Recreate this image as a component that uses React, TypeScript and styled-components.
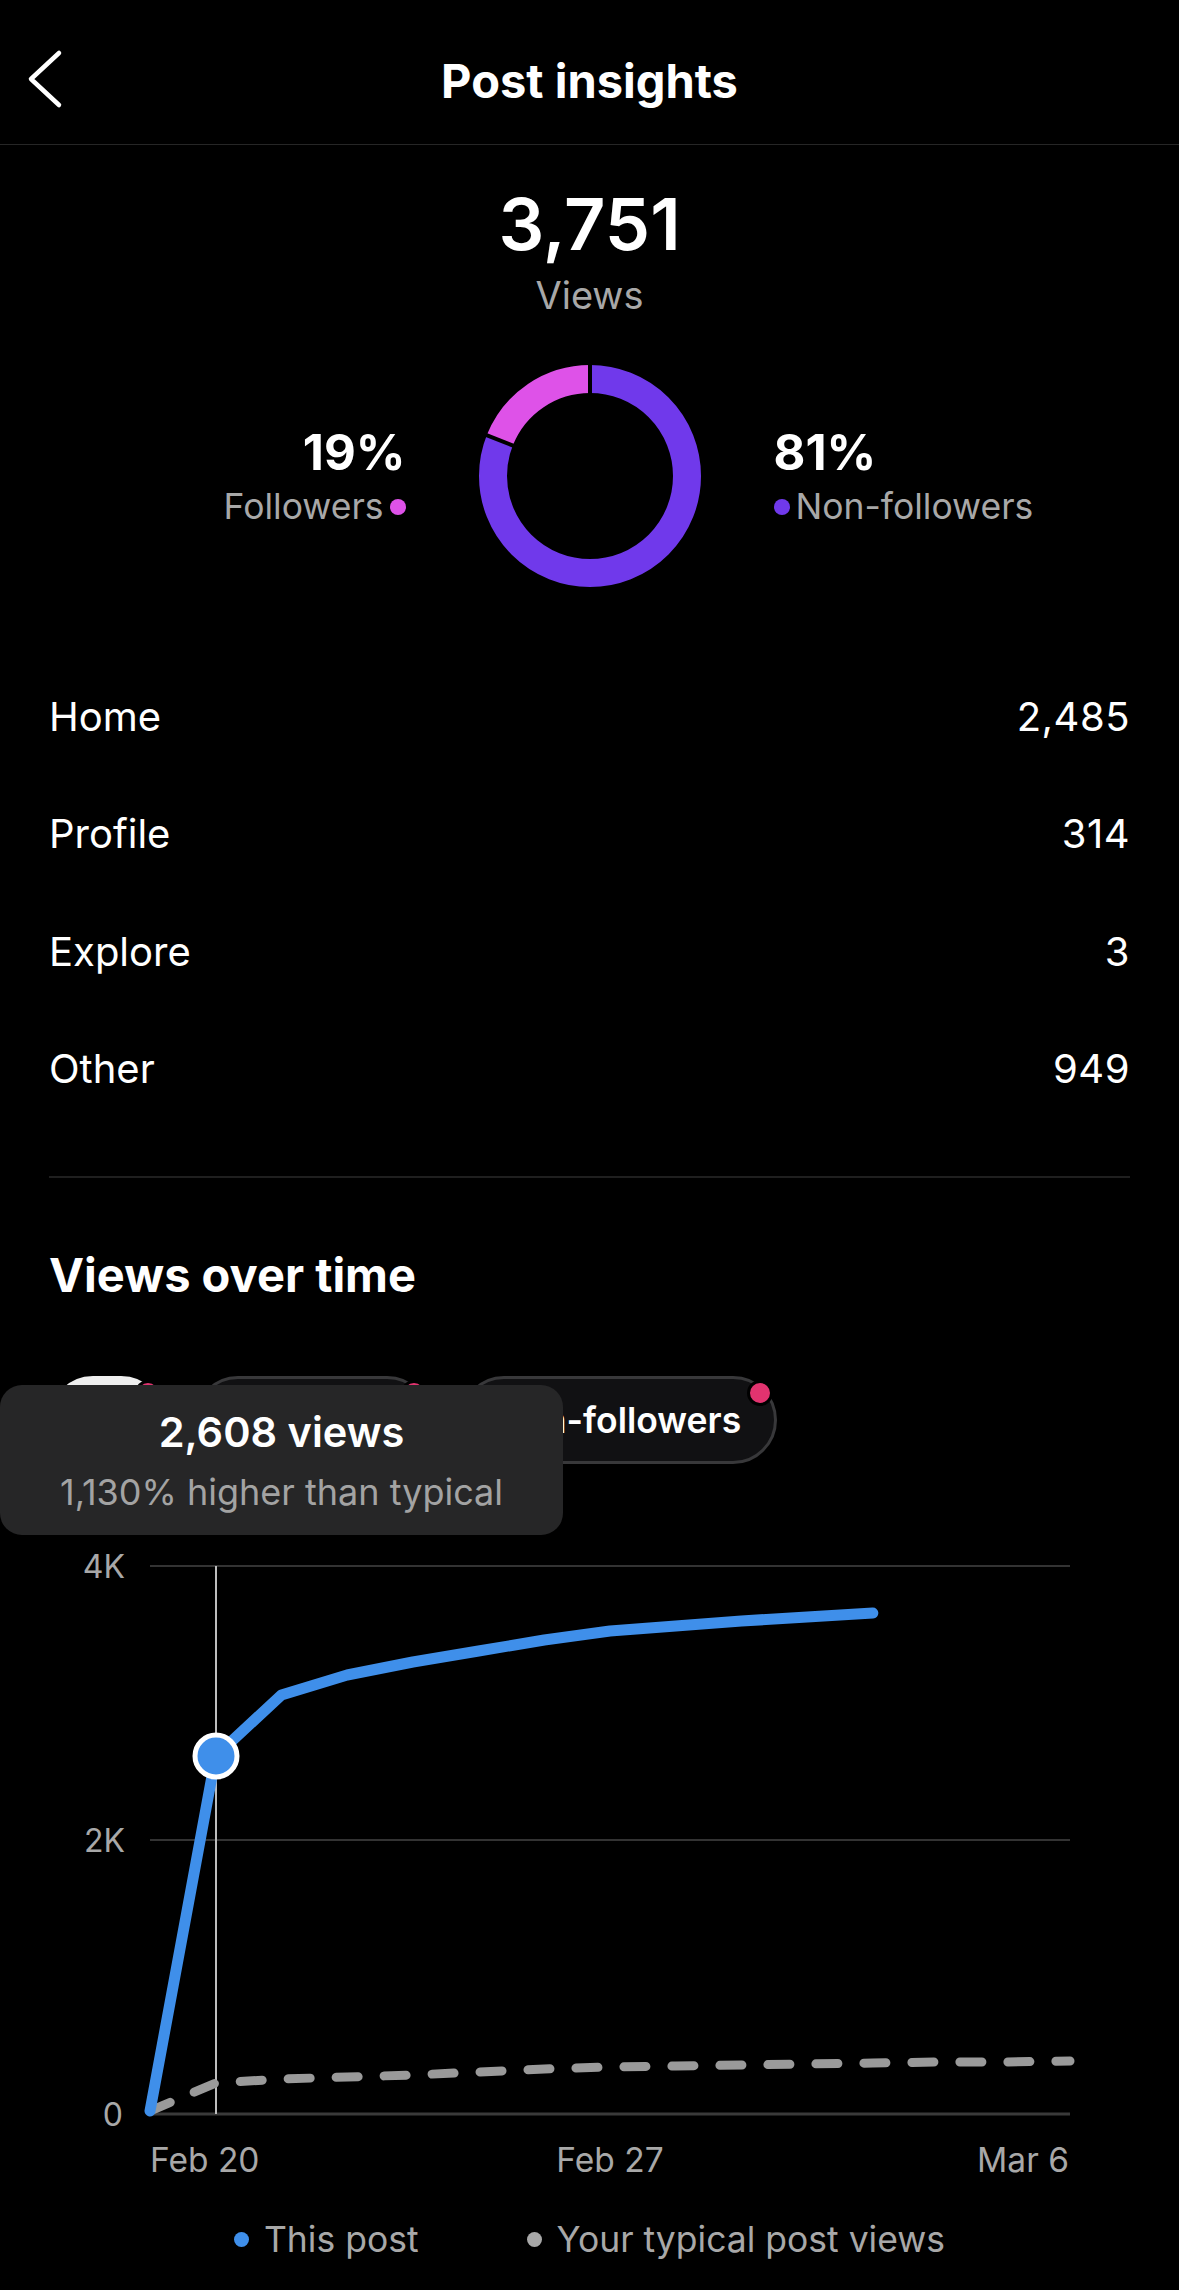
import styled, { createGlobalStyle } from "styled-components";

const GlobalStyle = createGlobalStyle`
  * { box-sizing: border-box; }
  body {
    margin: 0;
    background: #000;
    color: #fff;
    font-family: Inter, "Noto Sans", sans-serif;
  }
`;

const Page = styled.div`
  width: 1179px;
  min-height: 2290px;
  background: #000;
`;

const Header = styled.header`
  height: 145px;
  padding-top: 16px;
  display: grid;
  grid-template-columns: 1fr auto 1fr;
  align-items: center;
  border-bottom: 1px solid #262626;
`;

const BackButton = styled.button`
  justify-self: start;
  margin-left: 24px;
  margin-top: -2px;
  padding: 0;
  border: 0;
  background: none;
  display: flex;
`;

const Title = styled.h1`
  margin: 0;
  font-size: 47px;
  line-height: 1;
  font-weight: 700;
`;

const Summary = styled.section`
  display: flex;
  flex-direction: column;
  align-items: center;
  padding-top: 43px;
`;

const Total = styled.div`
  font-size: 72px;
  line-height: 1;
  font-weight: 600;
`;

const TotalLabel = styled.div`
  margin-top: 16px;
  font-size: 38px;
  line-height: 1;
  color: #a8a8a8;
`;

const Split = styled.div`
  margin-top: 51px;
  display: flex;
  align-items: center;
  gap: 73px;
`;

const SplitSide = styled.div<{ $align: "left" | "right" }>`
  width: 270px;
  display: flex;
  flex-direction: column;
  align-items: ${(p) => (p.$align === "right" ? "flex-end" : "flex-start")};
  gap: 12px;
`;

const Percent = styled.div`
  font-size: 49px;
  line-height: 1;
  font-weight: 700;
`;

const SplitLabel = styled.div`
  display: flex;
  align-items: center;
  gap: 6px;
  font-size: 35.5px;
  line-height: 1;
  color: #a8a8a8;
`;

const Dot = styled.span<{ $color: string; $size?: number }>`
  width: ${(p) => p.$size ?? 16}px;
  height: ${(p) => p.$size ?? 16}px;
  border-radius: 50%;
  background: ${(p) => p.$color};
  flex: none;
`;

const Sources = styled.ul`
  list-style: none;
  margin: 71px 49px 0 49px;
  padding: 0;
`;

const SourceRow = styled.li`
  height: 117.3px;
  display: flex;
  align-items: center;
  justify-content: space-between;
  font-size: 40px;
`;

const SourceValue = styled.span`
  letter-spacing: 0.5px;
`;

const Divider = styled.hr`
  margin: 49px 49px 0 49px;
  border: 0;
  height: 2px;
  background: #1f1f1f;
`;

const SectionTitle = styled.h2`
  margin: 73px 0 0 49px;
  font-size: 47px;
  line-height: 1;
  font-weight: 700;
`;

const ChartArea = styled.div`
  position: relative;
  margin-top: 78px;
`;

const Chips = styled.div`
  display: flex;
  gap: 29px;
  padding-left: 49px;
`;

const Chip = styled.div<{ $active?: boolean }>`
  position: relative;
  height: 88px;
  padding: 0 33px;
  border-radius: 44px;
  display: flex;
  align-items: center;
  font-size: 35.5px;
  font-weight: 600;
  background: ${(p) => (p.$active ? "#efefef" : "#111113")};
  color: ${(p) => (p.$active ? "#000" : "#fff")};
  border: 3px solid ${(p) => (p.$active ? "#efefef" : "#38383a")};
`;

const ChipBadge = styled.span`
  position: absolute;
  top: 1px;
  right: 1px;
  width: 26px;
  height: 26px;
  border-radius: 50%;
  background: #e2336f;
  border: 3px solid #000;
`;

const Tooltip = styled.div`
  position: absolute;
  left: 0;
  top: 9px;
  width: 563px;
  height: 150px;
  border-radius: 22px;
  background: #262627;
  display: flex;
  flex-direction: column;
  align-items: center;
  padding-top: 27px;
  gap: 20px;
`;

const TooltipValue = styled.div`
  font-size: 41.5px;
  line-height: 1;
  font-weight: 600;
`;

const TooltipNote = styled.div`
  font-size: 36px;
  line-height: 1;
  color: #a3a3a3;
`;

const ChartSvg = styled.svg`
  display: block;
  margin-top: 77px;
  font-family: Inter, "Noto Sans", sans-serif;
`;

const Legend = styled.div`
  margin-top: 36px;
  display: flex;
  justify-content: center;
  gap: 108px;
`;

const LegendItem = styled.div`
  display: flex;
  align-items: center;
  gap: 15px;
  font-size: 35.5px;
  line-height: 1;
  color: #a8a8a8;
`;

const sources = [
  { name: "Home", value: "2,485" },
  { name: "Profile", value: "314" },
  { name: "Explore", value: "3" },
  { name: "Other", value: "949" },
];

const PURPLE = "#7039eb";
const MAGENTA = "#de52e8";
const BLUE = "#3f8fea";

function Donut() {
  const r = 97;
  const c = 2 * Math.PI * r;
  const followers = 0.19;
  const gapAngle = -90 - followers * 360;
  const rad = (gapAngle * Math.PI) / 180;
  return (
    <svg width="222" height="222" viewBox="0 0 222 222">
      <g transform="rotate(-90 111 111)">
        <circle cx="111" cy="111" r={r} fill="none" stroke={PURPLE} strokeWidth="28"
          strokeDasharray={`${c * (1 - followers)} ${c}`} />
        <circle cx="111" cy="111" r={r} fill="none" stroke={MAGENTA} strokeWidth="28"
          strokeDasharray={`${c * followers} ${c}`} strokeDashoffset={-c * (1 - followers)} />
      </g>
      <line x1="111" y1="0" x2="111" y2="30" stroke="#000" strokeWidth="4" />
      <line x1={111 + 82 * Math.cos(rad)} y1={111 + 82 * Math.sin(rad)}
        x2={111 + 112 * Math.cos(rad)} y2={111 + 112 * Math.sin(rad)} stroke="#000" strokeWidth="4" />
    </svg>
  );
}

const dayX = (d: number) => 150 + (920 / 14) * d;
const postViews = [570, 215, 154, 134, 121, 110, 99, 90, 85, 80, 76, 72];
const typicalViews = [570, 542, 538, 536, 534, 531, 528, 526, 525, 524, 523, 522, 521, 521, 520];

function Chart() {
  const toPoints = (ys: number[]) => ys.map((y, i) => `${dayX(i)},${y}`).join(" ");
  const grid = [
    { y: 25, label: "4K" },
    { y: 299, label: "2K" },
  ];
  return (
    <ChartSvg width="1179" height="645" viewBox="0 0 1179 645">
      {grid.map((g) => (
        <g key={g.label}>
          <line x1="150" x2="1070" y1={g.y} y2={g.y} stroke="#333" strokeWidth="2" />
          <text x="125" y={g.y + 12} textAnchor="end" fontSize="32" fill="#a8a8a8">{g.label}</text>
        </g>
      ))}
      <line x1="150" x2="1070" y1="573" y2="573" stroke="#3a3a3a" strokeWidth="3" />
      <text x="123" y="585" textAnchor="end" fontSize="32" fill="#a8a8a8">0</text>
      <line x1="216" x2="216" y1="25" y2="573" stroke="#bdbdbd" strokeWidth="2" />
      <polyline points={toPoints(typicalViews)} fill="none" stroke="#9a9a9a" strokeWidth="9"
        strokeLinecap="round" strokeLinejoin="round" strokeDasharray="22 26" />
      <polyline points={toPoints(postViews)} fill="none" stroke={BLUE} strokeWidth="11"
        strokeLinecap="round" strokeLinejoin="round" />
      <circle cx="216" cy="215" r="21" fill={BLUE} stroke="#fff" strokeWidth="5" />
      <text x="150" y="631" fontSize="33.5" fill="#a8a8a8">Feb 20</text>
      <text x={dayX(7)} y="631" textAnchor="middle" fontSize="33.5" fill="#a8a8a8">Feb 27</text>
      <text x="1069" y="631" textAnchor="end" fontSize="33.5" fill="#a8a8a8">Mar 6</text>
    </ChartSvg>
  );
}

export default function App() {
  return (
    <>
      <GlobalStyle />
      <Page>
        <Header>
          <BackButton aria-label="Back">
            <svg width="40" height="60" viewBox="0 0 40 60">
              <polyline points="35,4 7,30 35,56" fill="none" stroke="#fff" strokeWidth="4.5"
                strokeLinecap="round" strokeLinejoin="round" />
            </svg>
          </BackButton>
          <Title>Post insights</Title>
          <span />
        </Header>

        <Summary>
          <Total>3,751</Total>
          <TotalLabel>Views</TotalLabel>
          <Split>
            <SplitSide $align="right">
              <Percent>19%</Percent>
              <SplitLabel>Followers<Dot $color={MAGENTA} /></SplitLabel>
            </SplitSide>
            <Donut />
            <SplitSide $align="left">
              <Percent>81%</Percent>
              <SplitLabel><Dot $color={PURPLE} />Non-followers</SplitLabel>
            </SplitSide>
          </Split>
        </Summary>

        <Sources>
          {sources.map((s) => (
            <SourceRow key={s.name}>
              <span>{s.name}</span>
              <SourceValue>{s.value}</SourceValue>
            </SourceRow>
          ))}
        </Sources>

        <Divider />

        <SectionTitle>Views over time</SectionTitle>

        <ChartArea>
          <Chips>
            <Chip $active>All<ChipBadge /></Chip>
            <Chip>Followers<ChipBadge /></Chip>
            <Chip>Non-followers<ChipBadge /></Chip>
          </Chips>
          <Tooltip>
            <TooltipValue>2,608 views</TooltipValue>
            <TooltipNote>1,130% higher than typical</TooltipNote>
          </Tooltip>
          <Chart />
          <Legend>
            <LegendItem><Dot $color={BLUE} $size={15} />This post</LegendItem>
            <LegendItem><Dot $color="#a8a8a8" $size={15} />Your typical post views</LegendItem>
          </Legend>
        </ChartArea>
      </Page>
    </>
  );
}
